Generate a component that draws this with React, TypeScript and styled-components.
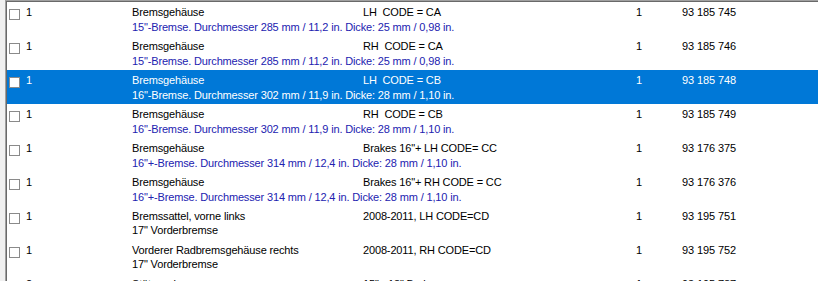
import React from "react";
import styled, { createGlobalStyle } from "styled-components";

const Global = createGlobalStyle`
  html, body { margin: 0; padding: 0; background: #f0f0f0; }
  body { font-family: "Liberation Sans", Arial, sans-serif; }
`;

const Frame = styled.div`
  width: 818px;
  height: 281px;
  overflow: hidden;
  box-sizing: border-box;
  padding-left: 5px;
  background: #f0f0f0;
`;

const List = styled.div`
  height: 100%;
  background: #fff;
  border-top: 1px solid #a0a0a0;
  border-left: 1px solid #a0a0a0;
  box-shadow: inset 1px 1px 0 #696969;
  padding: 1px 0 0 1px;
  display: flex;
  flex-direction: column;
`;

const Row = styled.div<{ $selected?: boolean }>`
  display: grid;
  grid-template-columns: 19px 106px 231px 273px 46px 1fr;
  grid-auto-rows: min-content;
  height: 34px;
  flex: none;
  box-sizing: border-box;
  padding-top: 4px;
  background: ${(p) => (p.$selected ? "#0078d7" : "transparent")};
  color: ${(p) => (p.$selected ? "#fff" : "#000")};
  font-size: 11px;
  line-height: 13px;
  letter-spacing: -0.15px;
  white-space: pre;
`;

const Check = styled.span`
  display: block;
  width: 11px;
  height: 11px;
  box-sizing: border-box;
  border: 1px solid #8a8a8a;
  background: #fff;
  margin: 3px 0 0 2px;
`;

const Cell = styled.span`
  display: block;
`;

const Num = styled(Cell)`
  letter-spacing: -0.1px;
`;

const Sub = styled.span<{ $blue?: boolean; $selected?: boolean; $gap: number }>`
  grid-column: 3 / 7;
  margin-top: ${(p) => p.$gap}px;
  color: ${(p) => (p.$selected ? "#fff" : p.$blue ? "#2222b0" : "#000")};
`;

type Item = {
  qty: string;
  name: string;
  code: string;
  count: string;
  part: string;
  sub: string;
  blue: boolean;
};

const D15 = '15"-Bremse. Durchmesser 285 mm / 11,2 in. Dicke: 25 mm / 0,98 in.';
const D16 = '16"-Bremse. Durchmesser 302 mm / 11,9 in. Dicke: 28 mm / 1,10 in.';
const D16p = '16"+-Bremse. Durchmesser 314 mm / 12,4 in. Dicke: 28 mm / 1,10 in.';

const items: Item[] = [
  { qty: "1", name: "Bremsgehäuse", code: "LH  CODE = CA", count: "1", part: "93 185 745", sub: D15, blue: true },
  { qty: "1", name: "Bremsgehäuse", code: "RH  CODE = CA", count: "1", part: "93 185 746", sub: D15, blue: true },
  { qty: "1", name: "Bremsgehäuse", code: "LH  CODE = CB", count: "1", part: "93 185 748", sub: D16, blue: true },
  { qty: "1", name: "Bremsgehäuse", code: "RH  CODE = CB", count: "1", part: "93 185 749", sub: D16, blue: true },
  { qty: "1", name: "Bremsgehäuse", code: 'Brakes 16"+ LH CODE= CC', count: "1", part: "93 176 375", sub: D16p, blue: true },
  { qty: "1", name: "Bremsgehäuse", code: 'Brakes 16"+ RH CODE = CC', count: "1", part: "93 176 376", sub: D16p, blue: true },
  { qty: "1", name: "Bremssattel, vorne links", code: "2008-2011, LH CODE=CD", count: "1", part: "93 195 751", sub: '17" Vorderbremse', blue: false },
  { qty: "1", name: "Vorderer Radbremsgehäuse rechts", code: "2008-2011, RH CODE=CD", count: "1", part: "93 195 752", sub: '17" Vorderbremse', blue: false },
  { qty: "2", name: "Stützwerkzeug", code: '15" - 18" Brakes', count: "1", part: "93 195 787", sub: "", blue: false },
];

export default function App() {
  return (
    <>
      <Global />
      <Frame>
        <List>
          {items.map((it, i) => {
            const sel = i === 2;
            return (
              <Row key={i} $selected={sel}>
                <Check />
                <Num>{it.qty}</Num>
                <Cell>{it.name}</Cell>
                <Cell>{it.code}</Cell>
                <Num>{it.count}</Num>
                <Num>{it.part}</Num>
                {it.sub && (
                  <Sub $blue={it.blue} $selected={sel} $gap={it.blue ? 1 : 0}>
                    {it.sub}
                  </Sub>
                )}
              </Row>
            );
          })}
        </List>
      </Frame>
    </>
  );
}
